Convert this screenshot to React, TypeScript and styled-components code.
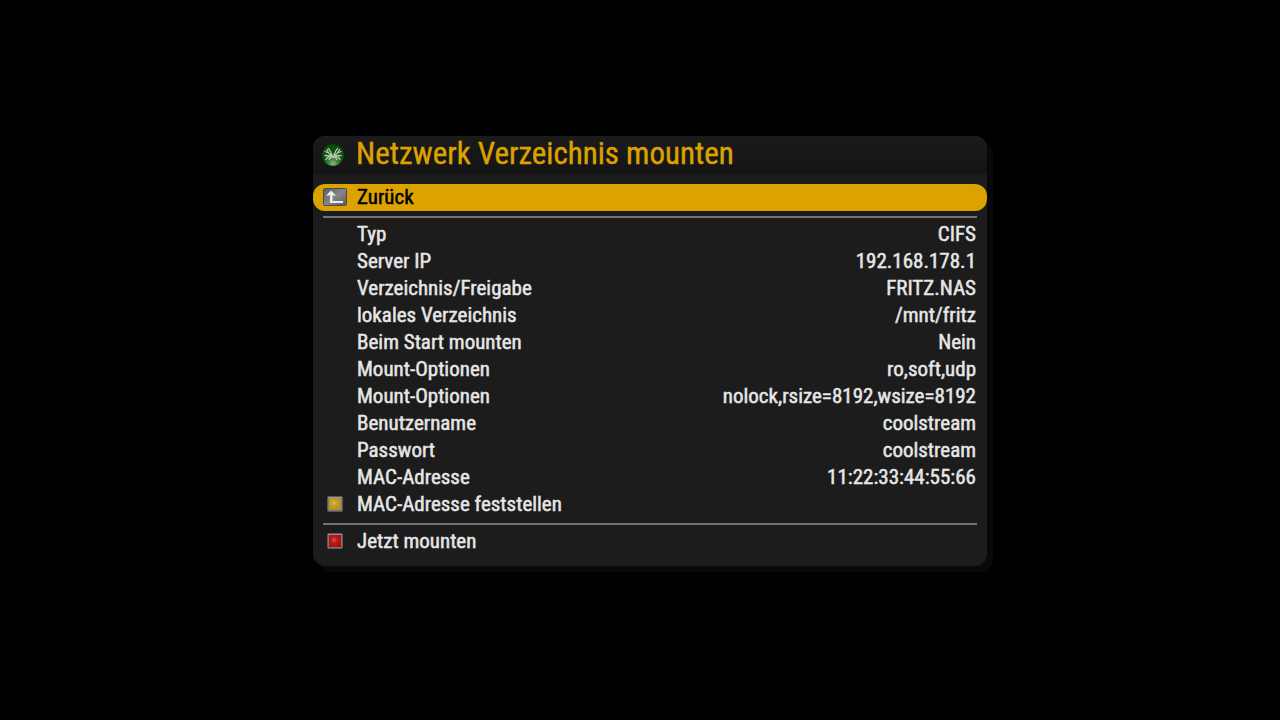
import React from "react";
import styled, { createGlobalStyle, css } from "styled-components";

const GlobalStyle = createGlobalStyle`
  *, *::before, *::after { box-sizing: border-box; }
  body {
    margin: 0;
    background: #000;
    color: #e6e6e6;
    font-family: "Roboto Condensed", "Roboto", sans-serif;
  }
`;

const Screen = styled.main`
  min-height: 100vh;
  display: flex;
  align-items: center;
  justify-content: center;
  padding: 0 0 18px 20px;
`;

const Window = styled.section`
  width: 100%;
  max-width: 674px;
  padding-bottom: 11px;
  border-radius: 12px;
  background: #1c1c1c;
  box-shadow: 6px 6px 0 #080808;
`;

const TitleBar = styled.header`
  display: flex;
  align-items: center;
  min-height: 38px;
  padding: 0 10px 2px 8px;
  border-radius: 12px 12px 0 0;
  background: linear-gradient(#1b1b1b, #141414);
`;

const Title = styled.h1`
  margin: 0 0 0 11px;
  font-size: 31px;
  line-height: 36px;
  font-weight: 400;
  color: #dca200;
  -webkit-text-stroke: 0.4px currentColor;
`;

const Menu = styled.nav`
  display: flex;
  flex-direction: column;
  padding-top: 10px;
`;

const Row = styled.button<{ $selected?: boolean }>`
  display: grid;
  grid-template-columns: 24px 1fr auto;
  column-gap: 10px;
  align-items: center;
  width: 100%;
  padding: 0 11px 0 10px;
  border: 0;
  border-radius: 12px;
  background: transparent;
  color: inherit;
  font: inherit;
  font-size: 21px;
  font-weight: 400;
  line-height: 27px;
  text-align: left;
  -webkit-text-stroke: 0.5px currentColor;
  ${(p) => p.$selected && css`background: #dca200; color: #000;`}
`;

const IconSlot = styled.span`
  display: flex;
  align-items: center;
  justify-content: center;
  padding-bottom: 1px;
`;

const Value = styled.span`
  text-align: right;
`;

const Divider = styled.hr`
  align-self: stretch;
  height: 2px;
  margin: 5px 10px 3px;
  border: 0;
  background: #737373;
`;

const NetworkIcon = () => (
  <svg width="24" height="24" viewBox="0 0 24 24" aria-hidden="true">
    <defs>
      <radialGradient id="globe" cx="50%" cy="90%" r="75%">
        <stop offset="0" stopColor="#8fbb84" />
        <stop offset="0.3" stopColor="#3b8336" />
        <stop offset="0.55" stopColor="#0c5a10" />
        <stop offset="1" stopColor="#084d0c" />
      </radialGradient>
    </defs>
    <circle cx="12" cy="13" r="10.8" fill="url(#globe)" />
    <g stroke="#b9c8b5" strokeWidth="1.3" fill="none" strokeLinecap="round">
      <path d="M11 13 L9.5 9.5 L7.5 6.5 M10.5 13.5 L7.5 11 L4 9.5 M7.5 11 L6 7.5 M10 14 L4 13.5 M10 14.5 L6.5 15.5 L5 17.5 M10 15 L8 17.5" />
      <path d="M13 13 L14.5 9.5 L16.5 6.5 M13.5 13.5 L16.5 11 L20 9.5 M16.5 11 L18.5 7.5 M14 14 L20 13.5 M14 14.5 L17.5 15.5 L19 17.5 M14 15 L16 17.5" />
    </g>
    <path d="M9.5 12.5 L12 13.5 L14.5 12.5 L14.5 15 L12 16.5 L9.5 15 Z" fill="#b4c4b0" />
  </svg>
);

const BackIcon = () => (
  <svg width="24" height="18" viewBox="0 0 24 18" aria-hidden="true">
    <defs>
      <linearGradient id="key" x1="0" y1="0" x2="1" y2="1">
        <stop offset="0" stopColor="#5c5c60" />
        <stop offset="0.5" stopColor="#868688" />
        <stop offset="1" stopColor="#59595d" />
      </linearGradient>
    </defs>
    <rect x="0.5" y="0.5" width="23" height="17" rx="1" fill="url(#key)" stroke="#4a4a56" />
    <path d="M8 2.5 L13 7.5 H9.5 V13 H20 V15 H7 V7.5 H3 Z" fill="#ececec" />
  </svg>
);

const ColourKey = ({ id, light, base, dark }: { id: string; light: string; base: string; dark: string }) => (
  <svg width="16" height="16" viewBox="0 0 16 16" aria-hidden="true">
    <defs>
      <radialGradient id={id} cx="42%" cy="42%" r="65%">
        <stop offset="0" stopColor={light} />
        <stop offset="0.35" stopColor={base} />
        <stop offset="1" stopColor={dark} />
      </radialGradient>
    </defs>
    <rect x="0.5" y="0.5" width="15" height="15" rx="1" fill="#77777b" stroke="#5a5a5e" />
    <path d="M1 1.5 H15" stroke="#939397" />
    <rect x="2" y="2" width="12" height="12" fill={`url(#${id})`} />
  </svg>
);

const settings = [
  ["Typ", "CIFS"],
  ["Server IP", "192.168.178.1"],
  ["Verzeichnis/Freigabe", "FRITZ.NAS"],
  ["lokales Verzeichnis", "/mnt/fritz"],
  ["Beim Start mounten", "Nein"],
  ["Mount-Optionen", "ro,soft,udp"],
  ["Mount-Optionen", "nolock,rsize=8192,wsize=8192"],
  ["Benutzername", "coolstream"],
  ["Passwort", "coolstream"],
  ["MAC-Adresse", "11:22:33:44:55:66"],
];

type ItemProps = { icon?: React.ReactNode; label: string; value?: string; selected?: boolean };

const Item = ({ icon, label, value, selected }: ItemProps) => (
  <Row type="button" $selected={selected}>
    <IconSlot>{icon}</IconSlot>
    <span>{label}</span>
    {value && <Value>{value}</Value>}
  </Row>
);

export default function App() {
  return (
    <>
      <GlobalStyle />
      <Screen>
        <Window aria-labelledby="window-title">
          <TitleBar>
            <NetworkIcon />
            <Title id="window-title">Netzwerk Verzeichnis mounten</Title>
          </TitleBar>
          <Menu aria-labelledby="window-title">
            <Item icon={<BackIcon />} label="Zurück" selected />
            <Divider />
            {settings.map(([label, value], i) => (
              <Item key={i} label={label} value={value} />
            ))}
            <Item
              icon={<ColourKey id="yellow" light="#e8bd4a" base="#c99f2a" dark="#b58f20" />}
              label="MAC-Adresse feststellen"
            />
            <Divider />
            <Item
              icon={<ColourKey id="red" light="#d85a5a" base="#bd1c1c" dark="#a80c0c" />}
              label="Jetzt mounten"
            />
          </Menu>
        </Window>
      </Screen>
    </>
  );
}
